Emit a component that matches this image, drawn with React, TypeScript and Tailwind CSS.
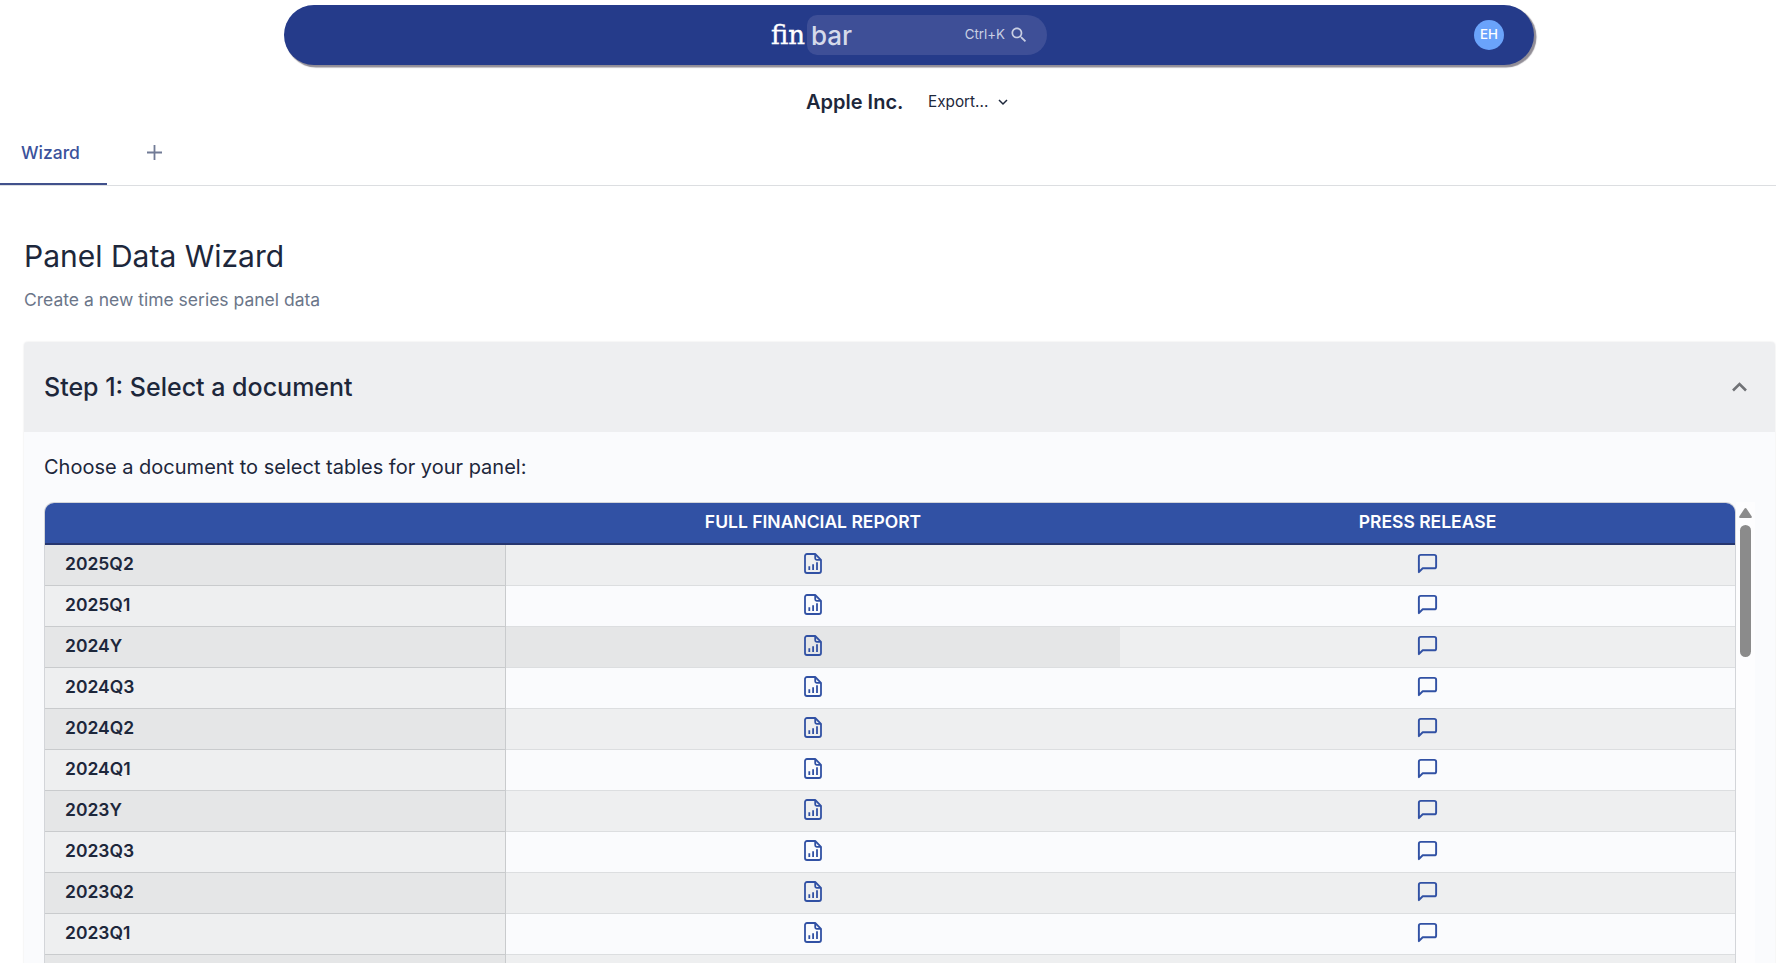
import { useState } from 'react'

interface DocumentRow {
  period: string
}

const ROWS: DocumentRow[] = [
  { period: '2025Q2' },
  { period: '2025Q1' },
  { period: '2024Y' },
  { period: '2024Q3' },
  { period: '2024Q2' },
  { period: '2024Q1' },
  { period: '2023Y' },
  { period: '2023Q3' },
  { period: '2023Q2' },
  { period: '2023Q1' },
]

function ReportIcon() {
  return (
    <svg width="18" height="21" viewBox="0 0 18 21" fill="none" stroke="#3151a4" strokeWidth="1.8" strokeLinejoin="round">
      <path d="M11.2 1H3a2 2 0 0 0-2 2v15a2 2 0 0 0 2 2h12a2 2 0 0 0 2-2V6.800z" />
      <path d="M11.2 1v4.3a1.5 1.5 0 0 0 1.5 1.5H17" />
      <path d="M5.3 13.3v3.700M9.1 11.2v5.800M13 9.300v7.700" />
    </svg>
  )
}

function MessageIcon() {
  return (
    <svg width="23" height="23" viewBox="0 0 24 24" fill="none" stroke="#3151a4" strokeWidth="2" strokeLinecap="round" strokeLinejoin="round">
      <path d="M21 15a2 2 0 0 1-2 2H7l-4 4V5a2 2 0 0 1 2-2h14a2 2 0 0 1 2 2z" />
    </svg>
  )
}

function Header() {
  return (
    <header className="ml-[284px] mt-[5px] flex h-[60px] w-[1250px] shrink-0 items-center rounded-full bg-[#253b8a] pr-[30px] shadow-[2px_2px_1px_0.5px_#918d96]">
      <span className="ml-[487px] w-9 font-['DejaVu_Serif',serif] text-[26px] leading-8 text-white [-webkit-text-stroke:0.4px_white]">
        fin
      </span>
      <div className="flex h-10 w-[240px] items-center rounded-l-[10px] rounded-r-[20px] bg-[#3e4f97] pl-[4px] pr-[18px] text-[#c9cfe3]">
        <span className="pt-[2px] text-[26px] font-medium leading-none text-[#d5daea]">bar</span>
        <span className="ml-auto text-[13.3px]">Ctrl+K</span>
        <svg className="ml-[4px]" width="20" height="20" viewBox="0 0 24 24" fill="currentColor">
          <path d="M15.5 14h-.79l-.28-.27C15.41 12.59 16 11.11 16 9.5 16 5.91 13.09 3 9.5 3S3 5.91 3 9.5 5.91 16 9.5 16c1.61 0 3.09-.59 4.23-1.57l.27.28v.79l5 4.99L20.49 19zm-6 0C7.01 14 5 11.99 5 9.5S7.01 5 9.5 5 14 7.01 14 9.5 11.99 14 9.5 14" />
        </svg>
      </div>
      <button className="ml-auto size-[30px] rounded-full bg-[#6aa3fb] text-[13.3px] font-medium text-white">
        EH
      </button>
    </header>
  )
}

function Tabs() {
  return (
    <nav className="flex h-[60px] border-b border-[#dcdee1]">
      <button className="flex w-[107px] items-center border-b-2 border-[#41518c] pb-[3px] pl-[21px] text-[17.5px] font-medium text-[#3b529b]">
        Wizard
      </button>
      <button className="ml-[40px] flex items-center pb-[7px]">
        <svg width="15" height="15" viewBox="0 0 15 15" stroke="#717b96" strokeWidth="1.8">
          <path d="M0 7.5h15M7.5 0v15" />
        </svg>
      </button>
    </nav>
  )
}

function DocumentTable() {
  const [active] = useState('2024Y')

  return (
    <div className="flex">
      <div className="w-[1692px] overflow-hidden rounded-t-[10px] border border-b-0 border-[#d3d5d9]">
        <div className="grid h-[42px] grid-cols-[461px_614px_615px] items-center border-b-2 border-[#26366f] bg-[#3151a4] pb-[1px] text-center text-[17.5px] font-semibold text-white">
          <span />
          <span>FULL FINANCIAL REPORT</span>
          <span>PRESS RELEASE</span>
        </div>
        {ROWS.map(({ period }) => (
          <div
            key={period}
            className="grid h-[41px] grid-cols-[461px_614px_615px] odd:bg-[#fafbfd] even:bg-[#eeeff0] [&:nth-child(even)>:first-child]:bg-[#e5e6e7]"
          >
            <div className="flex items-center border-b border-r border-[#c9cbcd] bg-[#eeeff0] pb-[1px] pl-5 text-[17.5px] font-semibold text-[#1d273b]">
              {period}
            </div>
            <div className={`flex items-center justify-center border-b border-[#dcdee0] pb-[3px] ${period === active ? 'bg-[#e5e6e7]' : ''}`}>
              <ReportIcon />
            </div>
            <div className="flex items-center justify-center border-b border-[#dcdee0] pb-[3px]">
              <MessageIcon />
            </div>
          </div>
        ))}
        {/* next row peeking in at the fold */}
        <div className="flex h-[41px] bg-[#eeeff0]">
          <div className="w-[461px] border-r border-[#c9cbcd] bg-[#e5e6e7]" />
        </div>
      </div>
      {/* scrollbar gutter */}
      <div className="flex w-[19px] flex-col items-center bg-[#fdfdfe] pt-[6px]">
        <svg width="13" height="10" viewBox="0 0 13 10" fill="#8b8b8b">
          <path d="M5.4.7a1.4 1.4 0 0 1 2.2 0l5 7.5c.5.9 0 1.8-1 1.8H1.4C.4 10-.1 9.1.4 8.2z" />
        </svg>
        <div className="mt-[7px] h-[132px] w-[11px] rounded-full bg-[#8b8b8b]" />
      </div>
    </div>
  )
}

export default function App() {
  return (
    <div className="flex h-[963px] w-[1776px] flex-col overflow-hidden bg-white font-['Inter',sans-serif] text-[#1d273b]">
      <Header />

      <div className="mt-[23px] flex h-[28px] shrink-0 items-center pl-[806px]">
        <h1 className="w-[122px] text-[20px] font-semibold">Apple Inc.</h1>
        <button className="flex items-center text-[15.3px]">
          Export...
          <svg className="ml-[10px]" width="10" height="7" viewBox="0 0 10 7" fill="none" stroke="currentColor" strokeWidth="1.5">
            <path d="M1 1l4 4 4-4" />
          </svg>
        </button>
      </div>

      <div className="mt-[10px] shrink-0">
        <Tabs />
      </div>

      <main className="shrink-0 pl-6">
        <h2 className="mt-[50px] text-[30px] leading-10">Panel Data Wizard</h2>
        <p className="mt-[10px] text-[17.5px] leading-7 text-[#6b7689]">
          Create a new time series panel data
        </p>

        <section className="mt-[28px] w-[1751px] rounded-t-[4px] bg-[#fafbfd] shadow-[0_0_2px_rgba(0,0,0,0.12)]">
          <div className="flex h-[90px] items-center justify-between rounded-t-[4px] bg-[#eeeff1] pl-5 pr-[28px]">
            <h3 className="pt-[2px] text-[25px] font-medium">Step 1: Select a document</h3>
            <svg width="15" height="10" viewBox="0 0 15 10" fill="none" stroke="#707276" strokeWidth="2.6">
              <path d="M1 8.5l6.5-6.5 6.5 6.5" />
            </svg>
          </div>
          <div className="pl-5 pt-[20px]">
            <p className="mb-[20px] text-[20px] leading-[30px]">
              Choose a document to select tables for your panel:
            </p>
            <DocumentTable />
          </div>
        </section>
      </main>
    </div>
  )
}
